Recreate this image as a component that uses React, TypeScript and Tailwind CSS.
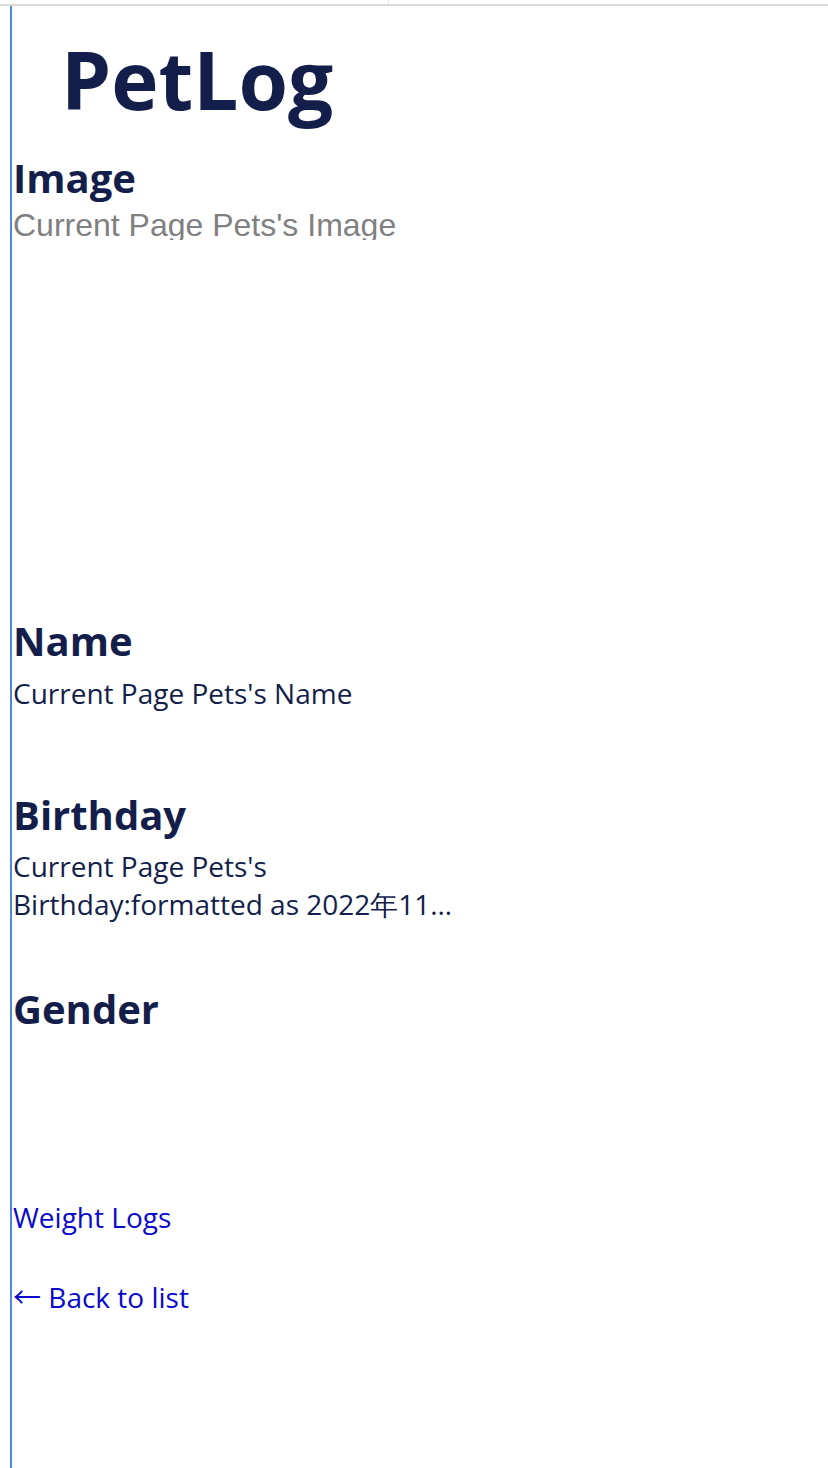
export default function App() {
  const heading = "font-['Open_Sans'] font-bold text-[40px] leading-[48px] text-[#141e4b]";
  const value = "font-['Open_Sans'] text-[28px] leading-[38px] text-[#141e4b]";
  const link = "font-['Open_Sans'] text-[28px] leading-[38px] text-[#0a0acc]";

  return (
    <div className="w-[828px] min-h-[1468px] bg-white">
      {/* top strip */}
      <div className="h-[4px] flex">
        <div className="w-[388px]" />
        <div className="w-px bg-[#e6e6e6]" />
      </div>
      <div className="h-[2px] bg-[#dadada]" />

      <main className="ml-[10px] border-l-2 border-[#4a89dc] min-h-[1462px] pl-px">
        <h1 className="pt-[23px] pl-[48px] font-['Open_Sans'] font-bold text-[80px] leading-[100px] text-[#141e4b]">
          PetLog
        </h1>

        <section>
          <h2 className={`${heading} mt-[24.5px]`}>Image</h2>
          <div className="mt-[8.5px] h-[30px] overflow-hidden font-['Liberation_Sans',sans-serif] text-[32px] leading-[31px] text-[#808080]">
            Current Page Pets's Image
          </div>
        </section>

        <section>
          <h2 className={`${heading} mt-[376.5px]`}>Name</h2>
          <p className={`${value} mt-[9.5px] w-[455px]`}>Current Page Pets's Name</p>
        </section>

        <section>
          <h2 className={`${heading} mt-[78.5px]`}>Birthday</h2>
          <p className={`${value} mt-[8.5px] w-[455px] line-clamp-2`}>
            Current Page Pets's Birthday:formatted as 2022年11月20日
          </p>
        </section>

        <section>
          <h2 className={`${heading} mt-[61.5px]`}>Gender</h2>
        </section>

        <a href="#" className={`${link} block mt-[165.5px] w-fit`}>
          Weight Logs
        </a>
        <a href="#" className={`${link} block mt-[41px] w-fit`}>
          <span className="font-['Noto_Sans_CJK_JP']">←</span> Back to list
        </a>
      </main>
    </div>
  );
}
